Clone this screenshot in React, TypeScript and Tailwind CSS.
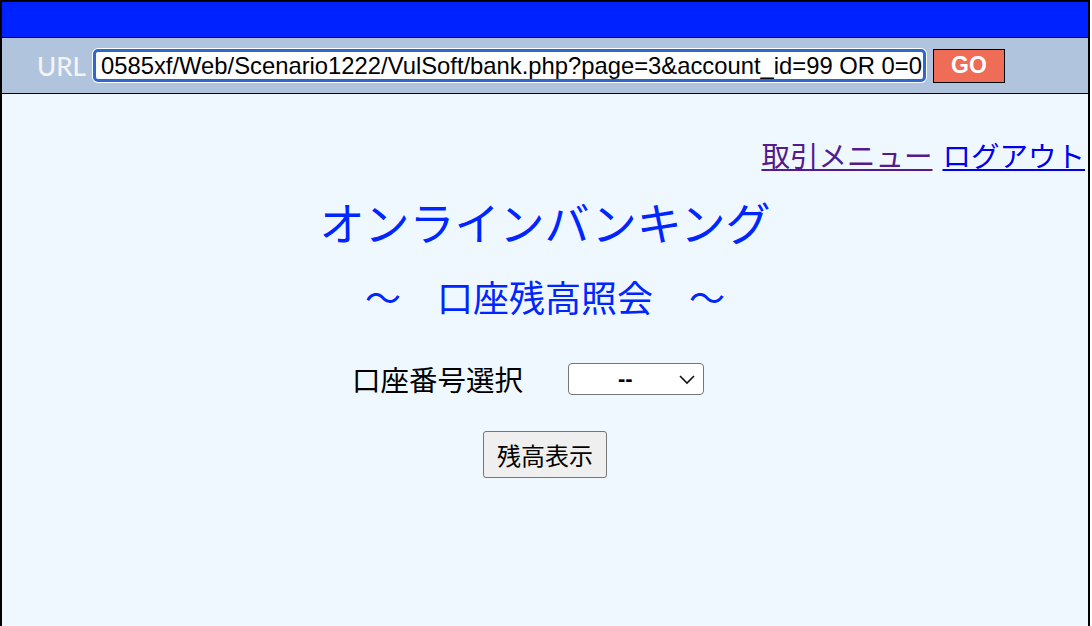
import React from "react";

export default function App() {
  const jp = { fontFamily: '"Noto Sans CJK JP", "Noto Sans", sans-serif' };
  return (
    <div className="w-[1090px] h-[626px] border-2 border-b-0 border-black bg-[#f0f8ff] overflow-hidden">
      <div className="h-[36px] bg-[#0022ff] border-b border-black" />
      <div className="h-[56px] bg-[#b0c4de] border-b border-black flex items-center">
        <span
          className="ml-[35px] text-[26px] text-[#f4f4f4] leading-none"
          style={{ fontFamily: 'Lato, "Open Sans", sans-serif', fontWeight: 500 }}
        >
          URL
        </span>
        <div className="ml-[7px] w-[833px] h-[33px] rounded-[5px] border-[3px] border-[#2f68cc] bg-white ring-1 ring-white flex items-center justify-end overflow-hidden">
          <span
            className="whitespace-nowrap text-[23.8px] text-black pr-[1px] leading-none"
            style={{ fontFamily: '"Liberation Sans", Arial, sans-serif' }}
          >
            0585xf/Web/Scenario1222/VulSoft/bank.php?page=3&amp;account_id=99 OR 0=0
          </span>
        </div>
        <button
          className="ml-[7px] w-[72px] h-[34px] bg-[#ef6c56] border border-black text-white font-bold text-[23px] leading-none"
          style={{ fontFamily: '"Liberation Sans", Arial, sans-serif' }}
        >
          GO
        </button>
      </div>

      <div className="flex flex-col" style={jp}>
        <div className="mt-[45px] h-[32px] flex justify-end pr-[3px] text-[28.5px] leading-[32px]">
          <a href="#" className="text-[#551a8b] underline">取引メニュー</a>
          <span className="w-[10px]" />
          <a href="#" className="text-[#0000ee] underline">ログアウト</a>
        </div>
        <div className="mt-[26px] h-[50px] text-center text-[45px] leading-[50px] text-[#0026ff]">
          オンラインバンキング
        </div>
        <div className="mt-[29px] h-[40px] text-center text-[36px] leading-[40px] text-[#0026ff]">
          ～　口座残高照会　～
        </div>
        <div className="mt-[47px] flex justify-center items-center pr-[34px]">
          <span className="text-[28.5px] leading-[32px] text-black">口座番号選択</span>
          <div className="ml-[45px] w-[136px] h-[32px] rounded-[4px] border border-[#767676] bg-white flex items-center relative">
            <span className="absolute left-[49px] text-[22px] font-bold text-black leading-none" style={{ fontFamily: '"Liberation Sans", Arial, sans-serif' }}>--</span>
            <svg className="absolute right-[7px]" width="18" height="12" viewBox="0 0 18 12">
              <path d="M2 3 L9 10 L16 3" fill="none" stroke="#111" strokeWidth="1.6" />
            </svg>
          </div>
        </div>
        <div className="mt-[36px] flex justify-center">
          <button className="w-[124px] h-[47px] bg-[#efefef] border border-[#767676] rounded-[3px] text-[24px] text-black leading-none">
            残高表示
          </button>
        </div>
      </div>
    </div>
  );
}
